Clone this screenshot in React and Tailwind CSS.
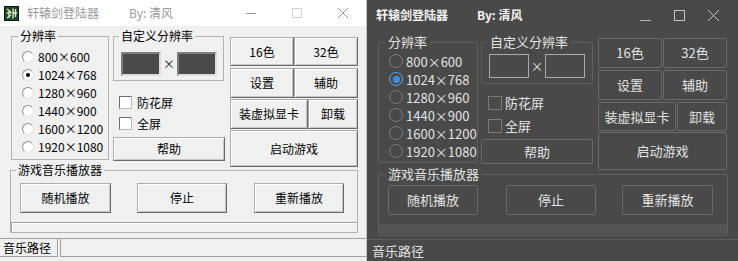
import React from "react";

const resolutions = ["800×600", "1024×768", "1280×960", "1440×900", "1600×1200", "1920×1080"];

const lightBtn =
  "flex items-center justify-center bg-[#f0f0f0] text-[12px] text-black border border-[#adadad] border-r-[#696969] border-b-[#696969] shadow-[inset_1px_1px_0_#ffffff,inset_-1px_-1px_0_#c6c6c6]";
const darkBtn =
  "flex items-center justify-center text-[13px] text-[#e2e2e2] border border-[#6a6a6a] rounded-[2px]";

const Logo = () => (
  <svg width="15" height="15" viewBox="0 0 15 15" className="ml-[4px] shrink-0">
    <rect x="0.5" y="0.5" width="14" height="14" fill="#1f4330" stroke="#0b1a12" />
    <path d="M3 3 L7 6 M2.5 7 H7.5 M5 4 V12 M3 12 L7 9" stroke="#cfe6a8" strokeWidth="1.4" fill="none" />
    <path d="M9 2.5 V12.5 M11.5 3 V11 M8.5 7 H13" stroke="#e8f0d0" strokeWidth="1.3" fill="none" />
  </svg>
);

const LightRadio = ({ checked }) => (
  <span className="w-[12px] h-[12px] rounded-full bg-white border border-[#8c8c8c] border-r-[#e3e3e3] border-b-[#e3e3e3] flex items-center justify-center shrink-0">
    {checked && <span className="w-[4px] h-[4px] rounded-full bg-black" />}
  </span>
);

const DarkRadio = ({ checked }) => (
  <span
    className={`w-[14px] h-[14px] rounded-full border flex items-center justify-center shrink-0 ${
      checked ? "border-[#5aa9ec]" : "border-[#7c7c7c]"
    }`}
  >
    {checked && <span className="w-[7px] h-[7px] rounded-full bg-[#3d91e0]" />}
  </span>
);

function LightWindow() {
  return (
    <div className="w-[367px] h-[261px] flex flex-col bg-[#f0f0f0] border-r border-[#c4c4c4] text-black">
      {/* title bar */}
      <div className="h-[26px] shrink-0 bg-white flex items-center">
        <Logo />
        <span className="ml-[8px] text-[12px] text-[#9a9a9a]">轩辕剑登陆器</span>
        <span className="ml-[30px] text-[12px] text-[#9a9a9a]">By: 清风</span>
        <div className="ml-auto flex h-full">
          <div className="w-[46px] flex items-center justify-center">
            <svg width="10" height="10"><path d="M0 5.5 H10" stroke="#999" /></svg>
          </div>
          <div className="w-[46px] flex items-center justify-center">
            <svg width="10" height="10"><rect x="0.5" y="0.5" width="9" height="9" fill="none" stroke="#d2d2d2" /></svg>
          </div>
          <div className="w-[46px] flex items-center justify-center">
            <svg width="10" height="10"><path d="M0 0 L10 10 M10 0 L0 10" stroke="#999" /></svg>
          </div>
        </div>
      </div>

      {/* body */}
      <div className="flex-1">
        <div className="h-[137px] flex items-start pt-[3px] pl-[11px]">
          {/* resolution group */}
          <fieldset className="w-[98px] h-[131px] border border-[#b2b2b2] shrink-0">
            <legend className="ml-[6px] px-[2px] text-[12px] leading-[14px]">分辨率</legend>
            <div className="pt-[5px] pl-[10px]">
              {resolutions.map((r, i) => (
                <div key={r} className="h-[18px] flex items-center">
                  <LightRadio checked={i === 1} />
                  <span className="ml-[4px] text-[12px] leading-none">{r}</span>
                </div>
              ))}
            </div>
          </fieldset>

          {/* custom resolution + checkboxes + help */}
          <div className="ml-[4px] w-[111px] shrink-0">
            <fieldset className="h-[52px] border border-[#b2b2b2]">
              <legend className="ml-[5px] px-[2px] text-[12px] leading-[14px]">自定义分辨率</legend>
              <div className="flex items-center pt-[9px] pl-[7px]">
                <div className="w-[40px] h-[24px] bg-[#4a4a4a] border-2 border-[#7e7e7e] border-r-[#dcdcdc] border-b-[#dcdcdc]" />
                <span className="w-[16px] text-center text-[12px] text-[#222]">×</span>
                <div className="w-[40px] h-[24px] bg-[#4a4a4a] border-2 border-[#7e7e7e] border-r-[#dcdcdc] border-b-[#dcdcdc]" />
              </div>
            </fieldset>
            <div className="mt-[11px] pl-[6px]">
              {["防花屏", "全屏"].map((t) => (
                <div key={t} className="h-[21px] flex items-center">
                  <span className="w-[13px] h-[13px] bg-white border border-[#6f6f6f] border-r-[#b9b9b9] border-b-[#b9b9b9]" />
                  <span className="ml-[5px] text-[12px] leading-none">{t}</span>
                </div>
              ))}
            </div>
            <button className={`${lightBtn} mt-[3px] w-[112px] h-[24px]`}>帮助</button>
          </div>

          {/* right buttons */}
          <div className="ml-[6px] mt-[8px] w-[128px] shrink-0 flex flex-col">
            <div className="flex h-[29px]">
              <button className={`${lightBtn} w-[64px]`}>16色</button>
              <button className={`${lightBtn} w-[64px]`}>32色</button>
            </div>
            <div className="flex h-[30px] mt-[2px]">
              <button className={`${lightBtn} w-[64px]`}>设置</button>
              <button className={`${lightBtn} w-[64px]`}>辅助</button>
            </div>
            <div className="flex h-[30px] mt-[1px]">
              <button className={`${lightBtn} w-[78px]`}>装虚拟显卡</button>
              <button className={`${lightBtn} w-[50px]`}>卸载</button>
            </div>
            <button className={`${lightBtn} h-[37px] mt-[1px]`}>启动游戏</button>
          </div>
        </div>

        {/* music player */}
        <fieldset className="ml-[10px] w-[348px] h-[70px] border border-[#b2b2b2]">
          <legend className="ml-[5px] px-[2px] text-[12px] leading-[14px]">游戏音乐播放器</legend>
          <div className="flex mt-[6px] pl-[9px] h-[30px]">
            <button className={`${lightBtn} w-[91px]`}>随机播放</button>
            <button className={`${lightBtn} w-[90px] ml-[26px]`}>停止</button>
            <button className={`${lightBtn} w-[90px] ml-[27px]`}>重新播放</button>
          </div>
          <div className="mt-[9px] h-[10px] border-t border-l border-[#a0a0a0] shadow-[inset_1px_1px_0_#ffffff]" />
        </fieldset>
      </div>

      {/* status bar */}
      <div className="h-[23px] shrink-0 border-t border-[#a0a0a0] flex pb-[4px]">
        <div className="w-[58px] pl-[3px] flex items-center border-r border-b border-[#a0a0a0] text-[12px]">音乐路径</div>
        <div className="flex-1 ml-[2px] border-l border-b border-[#a0a0a0]" />
      </div>
    </div>
  );
}

function DarkWindow() {
  return (
    <div className="flex-1 h-[261px] flex flex-col bg-[#494949] text-[#e2e2e2]">
      {/* title bar */}
      <div className="h-[30px] shrink-0 flex items-center">
        <span className="ml-[9px] text-[12px] font-bold text-[#f2f2f2]">轩辕剑登陆器</span>
        <span className="ml-[29px] text-[12px] font-bold text-[#f2f2f2]">By: 清风</span>
        <div className="ml-auto mr-[8px] flex h-full">
          <div className="w-[34px] flex items-center justify-center">
            <svg width="11" height="11"><path d="M0 10.5 H11" stroke="#b8b8b8" /></svg>
          </div>
          <div className="w-[34px] flex items-center justify-center">
            <svg width="11" height="11"><rect x="0.5" y="0.5" width="10" height="10" fill="none" stroke="#c4c4c4" /></svg>
          </div>
          <div className="w-[34px] flex items-center justify-center">
            <svg width="11" height="11"><path d="M0 0 L11 11 M11 0 L0 11" stroke="#c4c4c4" /></svg>
          </div>
        </div>
      </div>

      {/* body */}
      <div className="flex-1">
        <div className="h-[136px] flex items-start pt-[4px] pl-[11px]">
          <fieldset className="w-[100px] h-[129px] border border-[#5f5f5f] rounded-[3px] shrink-0">
            <legend className="ml-[6px] px-[3px] text-[13px] leading-[16px]">分辨率</legend>
            <div className="pt-[2px] pl-[10px]">
              {resolutions.map((r, i) => (
                <div key={r} className="h-[18px] flex items-center">
                  <DarkRadio checked={i === 1} />
                  <span className="ml-[3px] text-[13px] leading-none">{r}</span>
                </div>
              ))}
            </div>
          </fieldset>

          <div className="ml-[3px] w-[112px] shrink-0">
            <fieldset className="h-[50px] border border-[#5f5f5f] rounded-[3px]">
              <legend className="ml-[5px] px-[3px] text-[13px] leading-[16px]">自定义分辨率</legend>
              <div className="flex items-center pt-[4px] pl-[7px]">
                <div className="w-[40px] h-[24px] border border-[#a9a9a9]" />
                <span className="w-[16px] text-center text-[13px]">×</span>
                <div className="w-[40px] h-[24px] border border-[#a9a9a9]" />
              </div>
            </fieldset>
            <div className="mt-[7px] pl-[7px]">
              {["防花屏", "全屏"].map((t) => (
                <div key={t} className="h-[23px] flex items-center">
                  <span className="w-[14px] h-[14px] border border-[#7a7a7a]" />
                  <span className="ml-[3px] text-[13px] leading-none">{t}</span>
                </div>
              ))}
            </div>
            <button className={`${darkBtn} mt-[2px] w-[112px] h-[25px]`}>帮助</button>
          </div>

          <div className="ml-[5px] mt-[4px] w-[129px] shrink-0 flex flex-col">
            <div className="flex h-[30px] gap-[1px]">
              <button className={`${darkBtn} w-[64px]`}>16色</button>
              <button className={`${darkBtn} w-[64px]`}>32色</button>
            </div>
            <div className="flex h-[30px] mt-[2px] gap-[1px]">
              <button className={`${darkBtn} w-[64px]`}>设置</button>
              <button className={`${darkBtn} w-[64px]`}>辅助</button>
            </div>
            <div className="flex h-[29px] mt-[2px] gap-[1px]">
              <button className={`${darkBtn} w-[78px]`}>装虚拟显卡</button>
              <button className={`${darkBtn} w-[50px]`}>卸载</button>
            </div>
            <button className={`${darkBtn} h-[38px] mt-[1px]`}>启动游戏</button>
          </div>
        </div>

        <fieldset className="ml-[11px] w-[350px] h-[70px] border border-[#5f5f5f] rounded-[3px]">
          <legend className="ml-[6px] px-[3px] text-[13px] leading-[16px]">游戏音乐播放器</legend>
          <div className="flex mt-[3px] pl-[9px] h-[30px]">
            <button className={`${darkBtn} w-[90px]`}>随机播放</button>
            <button className={`${darkBtn} w-[90px] ml-[28px]`}>停止</button>
            <button className={`${darkBtn} w-[91px] ml-[26px]`}>重新播放</button>
          </div>
          <div className="mt-[9px] h-[10px] bg-[#555555]" />
        </fieldset>
      </div>

      {/* status bar */}
      <div className="h-[22px] shrink-0 border-t border-[#5c5c5c] flex items-center pl-[5px] text-[13px]">
        音乐路径
      </div>
    </div>
  );
}

export default function App() {
  return (
    <div className="w-[738px] h-[261px] flex bg-[#f0f0f0] font-['Noto_Sans_CJK_SC',sans-serif] overflow-hidden">
      <LightWindow />
      <DarkWindow />
    </div>
  );
}
